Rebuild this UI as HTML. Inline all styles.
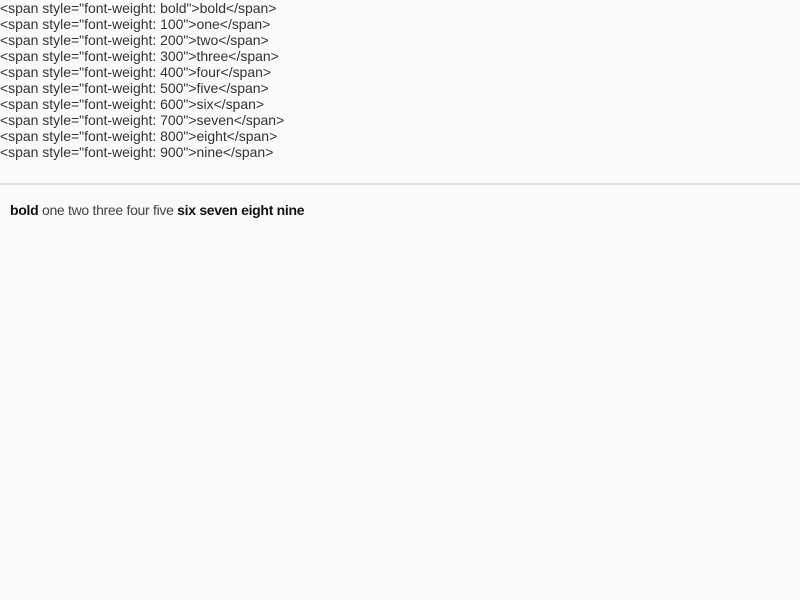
<!DOCTYPE html>
<html><head><style>
html,body{margin:0;padding:0;background:#fafafa;width:800px;height:600px;overflow:hidden}
body{font-family:"Liberation Sans",sans-serif;color:#222}
.code{font-size:14px;line-height:16px;letter-spacing:-0.02px;color:#333;white-space:pre;margin:0;padding:0}
.hr{position:absolute;top:183px;left:0;width:800px;height:2px;background:#e6e6e6}
.out{position:absolute;top:201px;left:10px;font-size:14px;line-height:18px;letter-spacing:-0.3px;color:#111}
.out span.l{color:#444}
</style></head><body>
<div class="code">&lt;span style="font-weight: bold"&gt;bold&lt;/span&gt;
&lt;span style="font-weight: 100"&gt;one&lt;/span&gt;
&lt;span style="font-weight: 200"&gt;two&lt;/span&gt;
&lt;span style="font-weight: 300"&gt;three&lt;/span&gt;
&lt;span style="font-weight: 400"&gt;four&lt;/span&gt;
&lt;span style="font-weight: 500"&gt;five&lt;/span&gt;
&lt;span style="font-weight: 600"&gt;six&lt;/span&gt;
&lt;span style="font-weight: 700"&gt;seven&lt;/span&gt;
&lt;span style="font-weight: 800"&gt;eight&lt;/span&gt;
&lt;span style="font-weight: 900"&gt;nine&lt;/span&gt;</div>
<div class="hr"></div>
<div class="out"><b>bold</b> <span class="l">one two three four five</span> <b>six seven eight nine</b></div>
</body></html>
